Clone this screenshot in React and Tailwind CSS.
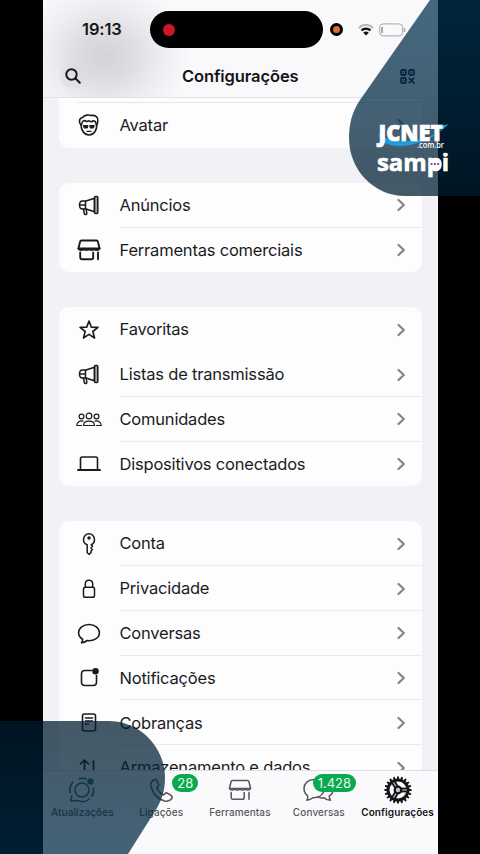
import { clsx } from 'clsx';

function Icon({ className, box = '0 0 24 24', width = 1.5, children }) {
    return (
        <svg
            viewBox={box}
            className={clsx('shrink-0 overflow-visible', className)}
            fill="none"
            stroke="currentColor"
            strokeWidth={width}
            strokeLinecap="round"
            strokeLinejoin="round"
        >
            {children}
        </svg>
    );
}

const AvatarIcon = () => (
    <Icon className="w-6 h-6" width={1.6}>
        <path d="M4 12C1.500 9.500 2 5 5.500 4.500C7.500 1.800 12 1.500 14 2.500C18.500 1.800 21.500 4.500 20.800 8C20.800 10 20.500 11 19.500 12" />
        <path d="M4 11.500C4 17 7 22 12 22C17 22 20 17 19.800 11.500" />
        <path d="M4.600 11.500C5 8.500 6 7.500 8 7.500C9 9 10.500 8.500 12 7.800C13.500 8.800 15 9 16 7.800C18 7.800 19 9 19.200 11.500" />
        <path d="M10 18.400H14" strokeWidth="1.200" />
        <path d="M6.700 12.500H11L10.400 15H7.500ZM13 12.500H17.300L16.500 15H13.600Z" fill="currentColor" strokeWidth="1" />
    </Icon>
);

const MegaphoneIcon = () => (
    <Icon className="w-6 h-6">
        <path d="M17.500 4.200L9 7H5.500C3.500 7 2.500 8.800 2.500 11C2.500 13.300 3.500 15 5.500 15H9L17.500 17.800Z" />
        <rect x="17.500" y="2.500" width="3.300" height="17" rx="1" fill="#a3a3a7" />
        <path d="M8.500 7.300V15M6.500 15L7.300 19.500C7.600 20.800 10 20.800 9.800 19.200L9.200 15.500M3 11H8.500" />
    </Icon>
);

const StoreIcon = ({ width = 1.9 }) => (
    <Icon className="w-6 h-6" width={width}>
        <path d="M4.500 2.500H19.500C20.500 2.500 20.800 3.200 21 4L22.600 10.500H1.400L3 4C3.200 3.200 3.500 2.500 4.500 2.500Z" />
        <path d="M1.500 10.500C2.500 12.500 5.500 12.500 6.800 10.800C8 12.500 11 12.500 12 10.800C13 12.500 16 12.500 17.200 10.800C18.500 12.500 21.500 12.500 22.500 10.500" />
        <path d="M3.200 14.500V19C3.200 20.700 4 21.300 5 21.300H14.500C15.600 21.300 16.200 20.500 16.200 19.500V14.500M21 14.500V21.300" />
    </Icon>
);

const StarIcon = () => (
    <Icon className="w-6 h-6" width={1.6}>
        <path d="M12 3L14.300 9.100L21 9.400L15.800 13.500L17.600 20L12 16.300L6.400 20L8.200 13.500L3 9.400L9.700 9.100Z" />
    </Icon>
);

const PeopleIcon = () => (
    <Icon className="w-[26px] h-5" box="0 0 26 20" width={1.2}>
        <circle cx="5.500" cy="6.500" r="2.400" />
        <circle cx="20.500" cy="6.500" r="2.400" />
        <circle cx="13" cy="6" r="2.800" />
        <path d="M7.500 15.500C7.500 12.500 9.500 11.200 13 11.200C16.500 11.200 18.500 12.500 18.500 15.500Z" />
        <path d="M7 11.100C3 10.400 1 12.500 .800 15.500H5.500M19 11.100C23 10.400 25 12.500 25.200 15.500H20.500" />
    </Icon>
);

const LaptopIcon = () => (
    <Icon className="w-6 h-6" width={1.6}>
        <path d="M3.500 17.500V6.800C3.500 5.600 4.200 5 5.200 5H18.800C19.800 5 20.500 5.600 20.500 6.800V17.500" />
        <path d="M1 18H23" strokeWidth="2" />
    </Icon>
);

const KeyIcon = () => (
    <Icon className="w-6 h-6">
        <path d="M10.200 12.700C7.700 12 6.500 10 6.500 7.500C6.500 4.300 8.900 1.700 12 1.700C15.100 1.700 17.500 4.300 17.500 7.500C17.500 10 16 12 14.200 12.700L15.500 14.300L14 16L15.300 17.600L14 19.200V20.700L12 22.300L10.200 20.700Z" />
        <circle cx="12" cy="6" r="1" fill="currentColor" />
    </Icon>
);

const LockIcon = () => (
    <Icon className="w-6 h-6">
        <rect x="6.500" y="10.200" width="11" height="10" rx="1.800" />
        <path d="M8.300 10V7C8.300 4.700 9.900 3.200 12 3.200C14.100 3.200 15.700 4.700 15.700 7V10" />
    </Icon>
);

const BubbleIcon = () => (
    <Icon className="w-6 h-6" width={1.6}>
        <path d="M12 2.500C6.200 2.500 1.600 6.100 1.600 10.700C1.600 13.400 3.200 15.700 5.600 17.200C5.800 18.700 5.400 19.700 4.500 20.600C6.700 20.700 8.500 19.900 9.800 18.600C16.800 19.400 22.400 16 22.400 10.700C22.400 6.100 17.800 2.500 12 2.500Z" />
    </Icon>
);

const NotificationIcon = () => (
    <Icon className="w-6 h-6" width={1.6}>
        <path d="M14.500 4.500H8C5.800 4.500 4.500 5.800 4.500 8V16C4.500 18.200 5.800 19.500 8 19.500H16C18.200 19.500 19.500 18.200 19.500 16V9.500" />
        <circle cx="18.500" cy="5.300" r="2.500" fill="currentColor" />
    </Icon>
);

const ReceiptIcon = () => (
    <Icon className="w-6 h-6" width={1.6}>
        <rect x="5.500" y="3" width="13" height="17" rx="2" />
        <path d="M8.500 7H15.500M8.500 10H15.500M8.500 13H11.500" />
    </Icon>
);

const ArrowsIcon = () => (
    <Icon className="w-6 h-6" width={1.7}>
        <path d="M7.500 19V4M3.500 8L7.500 4L11.500 8M16.500 5V20M12.500 16L16.500 20L20.500 16" />
    </Icon>
);

const UpdatesIcon = () => (
    <Icon className="w-[26px] h-[26px]" box="0 0 26 26" width={1.5}>
        <circle cx="13" cy="13" r="7" />
        <path d="M10 1.800C12.500 1 15 1 17 1.800M24.500 11C25 14 24.300 17 22.800 19.200M20.300 22C18 24 15 25 12 24.600C10 24.300 8.500 24 7.500 23.500L2 24L2.800 18.800M1.300 15.500C.500 12 1.500 8 4 5" />
        <circle cx="21.500" cy="4.500" r="2.500" fill="#16856f" stroke="#16856f" />
    </Icon>
);

const CallsIcon = () => (
    <Icon className="w-[26px] h-[26px]" box="0 0 26 26" width={1.5}>
        <path d="M6.500 2.500C3.500 4 2.300 6.500 3 9.500C4.800 16.500 10 22 16.500 24C19.500 24.800 22 24 23.800 21.500C24.500 20.500 24.300 19.500 23.300 18.700L19.800 16.300C18.800 15.600 17.800 15.800 17 16.600L15.500 18C12.500 16.500 9.800 13.500 8.700 10.800L10.200 9.200C10.800 8.500 10.800 7.500 10.300 6.700L8.500 3.300C8 2.300 7.300 2 6.500 2.500Z" />
    </Icon>
);

const ChatsIcon = () => (
    <Icon className="w-[31px] h-[26px]" box="0 0 31 26" width={1.5}>
        <path d="M11 2.500C5 2.500 1 6.500 1 11.500C1 14.500 2.300 17 4.700 18.800C5 20.500 4.500 22 3.800 23.300C6.300 23 8.500 22 10 20.700C15 21 19.500 18.500 21 14" />
        <path d="M14.500 19.700C16.500 21 19 21.300 21 20.700C22.500 22.300 25 23.300 27.500 23.300C26.500 22 26.200 20.500 26.300 19C29 17.500 30 15 30 12.500" />
    </Icon>
);

const gearTeeth = Array.from({ length: 20 }, (_, i) => i * 18);

const GearIcon = () => (
    <Icon className="w-7 h-7" box="0 0 28 28">
        {gearTeeth.map((a) => (
            <path key={a} d="M14 1.200V3" transform={`rotate(${a} 14 14)`} strokeWidth="2" />
        ))}
        <circle cx="14" cy="14" r="10" strokeWidth="3" />
        {[90, 210, 330].map((a) => (
            <g key={a} transform={`rotate(${a} 14 14)`}>
                <path d="M14 4.500V11" strokeWidth="4.800" strokeLinecap="butt" />
                <path d="M14 5.500V10" stroke="#d9d9dc" strokeWidth="1" />
            </g>
        ))}
        <circle cx="14" cy="14" r="3.300" fill="#c4c4c8" strokeWidth="2.200" />
    </Icon>
);

const QrIcon = () => (
    <Icon className="w-[15px] h-[15px] text-[#1a2228]" box="0 0 15 15" width={1.8}>
        <rect x="1" y="1" width="5" height="5" rx="1.200" />
        <rect x="9" y="1" width="5" height="5" rx="1.200" />
        <rect x="1" y="9" width="5" height="5" rx="1.200" />
        <path d="M3.500 3.500V3.600M11.500 3.500V3.600M3.500 11.500V11.600M9.300 9.300L14 14M13.700 9.300L9.300 13.700" />
    </Icon>
);

const sections = [
    [
        { label: 'Anúncios', icon: MegaphoneIcon },
        { label: 'Ferramentas comerciais', icon: StoreIcon },
    ],
    [
        { label: 'Favoritas', icon: StarIcon, noLine: true },
        { label: 'Listas de transmissão', icon: MegaphoneIcon },
        { label: 'Comunidades', icon: PeopleIcon },
        { label: 'Dispositivos conectados', icon: LaptopIcon },
    ],
    [
        { label: 'Conta', icon: KeyIcon },
        { label: 'Privacidade', icon: LockIcon },
        { label: 'Conversas', icon: BubbleIcon },
        { label: 'Notificações', icon: NotificationIcon },
        { label: 'Cobranças', icon: ReceiptIcon },
        { label: 'Armazenamento e dados', icon: ArrowsIcon },
    ],
];

const tabs = [
    { label: 'Atualizações', icon: UpdatesIcon },
    { label: 'Ligações', icon: CallsIcon, badge: '28', badgeClass: 'left-[50.500px] w-[26px]' },
    { label: 'Ferramentas', icon: () => <StoreIcon width={1.5} /> },
    { label: 'Conversas', icon: ChatsIcon, badge: '1.428', badgeClass: 'left-[33.500px] w-[43px]' },
    { label: 'Configurações', icon: GearIcon, active: true },
];

function Row({ label, icon: RowIcon, last }) {
    return (
        <div className="flex h-[44.8px] pl-[15px]">
            <div className="w-[31px] flex items-center justify-center pt-px text-[#1b1b1e]">
                <RowIcon />
            </div>
            <div className={clsx('ml-[15px] flex-1 flex items-center justify-between pt-[1.500px] pr-[16px] border-b', last ? 'border-transparent' : 'border-[#ebebef]')}>
                <span className="text-[16.5px] tracking-[-0.2px] whitespace-nowrap text-[#1b1b1e]">{label}</span>
                <Icon className="w-2.5 h-3.5 text-[#838387]" box="0 0 10 14" width={2.2}>
                    <path d="M2.500 2L7.800 7L2.500 12" />
                </Icon>
            </div>
        </div>
    );
}

function Header() {
    return (
        <header className="h-[98px] shrink-0 border-b border-[#e2e2e6] bg-[#f9f9fc] bg-[radial-gradient(ellipse_85px_75px_at_62px_56px,#d3d3d7_0%,#dcdce0_30%,#ededf1_65%,transparent_100%)]">
            <div className="flex items-center pt-[11px]">
                <div className="w-[107px] pl-[39px] text-[16.5px] font-semibold tracking-[-0.1px] text-[#161618]">19:13</div>
                <div className="w-[173px] h-[37px] rounded-full bg-black flex items-center pl-[13px]">
                    <div className="size-3 rounded-full bg-[#cf1627]" />
                </div>
                <div className="ml-[7px] size-[13px] rounded-full bg-black flex items-center justify-center">
                    <div className="size-[7px] rounded-full bg-[#d8702f]" />
                </div>
                <svg viewBox="0 0 16 12" className="ml-[15px] w-4 h-3" fill="none" stroke="#111" strokeWidth="2">
                    <path d="M1 4C5-.2 11-.2 15 4" stroke="#b5b5b8" />
                    <path d="M3.500 6.500C6 4 10 4 12.500 6.500" strokeWidth="2.300" />
                    <path d="M5.200 8.700C7 7.200 9 7.200 10.800 8.700L8 11.500Z" fill="#111" stroke="none" />
                </svg>
                <svg viewBox="0 0 27 14" className="ml-[5px] w-[27px] h-3.5" fill="none" stroke="#aaa7a9">
                    <rect x=".600" y=".900" width="23" height="12" rx="3.500" />
                    <path d="M25.500 5V9" strokeWidth="1.500" />
                    <path d="M3 4V10" strokeWidth="2" />
                </svg>
            </div>
            <div className="flex items-center h-14 pl-[17px] pr-[23px]">
                <div className="w-[25px] h-[25px] rounded-full bg-[#d9d9dd]/40 flex items-center justify-center">
                    <Icon className="w-4 h-4 text-[#19191b]" box="0 0 16 16" width={2}>
                        <circle cx="6.500" cy="6.500" r="5.200" />
                        <path d="M10.500 10.500L14.800 14.800" />
                    </Icon>
                </div>
                <h1 className="flex-1 pr-1 text-center text-[16.5px] font-semibold tracking-[-0.1px] text-[#151517]">Configurações</h1>
                <QrIcon />
            </div>
        </header>
    );
}

function TabBar() {
    return (
        <nav className="h-[84px] shrink-0 flex pr-[.500px] border-t border-[#dedee2] bg-[#fafafd]">
            {tabs.map(({ label, icon: TabIcon, badge, badgeClass, active }) => (
                <div key={label} className={clsx('relative flex-1 basis-0 min-w-0 flex flex-col items-center pt-[5px]', active ? 'text-[#151517]' : 'text-[#57575b]')}>
                    <div className="h-7 flex items-center">
                        <TabIcon />
                    </div>
                    <span className={clsx('text-[10px] leading-4 tracking-[0.1px] whitespace-nowrap', active ? 'font-semibold' : 'font-medium')}>{label}</span>
                    {badge && (
                        <span className={clsx('absolute top-[3px] h-[18px] rounded-full bg-[#0aa850] text-[#e5fae9] text-[13px] leading-[18px] text-center', badgeClass)}>
                            {badge}
                        </span>
                    )}
                </div>
            ))}
        </nav>
    );
}

function Logo() {
    return (
        <div className="absolute left-[376px] top-[120px] w-[76px] text-white">
            <svg viewBox="0 0 76 58" className="w-[76px] h-[58px] overflow-visible" fill="#fff">
                <path d="M2 14C6 33 48 29 72 5C55 22 20 27 2 14Z" fill="#1ba0dd" />
                <g fontFamily="Open Sans, sans-serif">
                    <text x="2.500" y="20.500" fontSize="23" fontWeight="800" stroke="#fff" strokeWidth=".700" textLength="65" lengthAdjust="spacingAndGlyphs">JCNET</text>
                    <text x="41" y="28.300" fontSize="8.500" fontWeight="600" textLength="27" lengthAdjust="spacingAndGlyphs">.com.br</text>
                    <text x="1" y="50.500" fontSize="24" fontWeight="700" stroke="#fff" strokeWidth=".700" textLength="72" lengthAdjust="spacingAndGlyphs">sampi</text>
                </g>
                <path d="M62 4.500C66 6 69 5.500 72.500 4C69 8 65 11 62 12.500C64.500 10 66.500 8 67.500 6.500Z" fill="#1ba0dd" />
                <rect x="53" y="38" width="12.500" height="12.500" rx="5" />
                <g fill="#7526b5">
                    <circle cx="55.600" cy="44" r="1.100" />
                    <circle cx="58.900" cy="44" r="1.100" />
                    <circle cx="62.200" cy="44" r="1.100" />
                </g>
            </svg>
        </div>
    );
}

function Overlay() {
    return (
        <div className="absolute inset-0 pointer-events-none">
            <svg viewBox="0 0 480 854" className="w-full h-full">
                <defs>
                    <linearGradient id="top" x1="0" y1="0" x2="0" y2="1">
                        <stop offset="0" stopColor="#003350" />
                        <stop offset=".600" stopColor="#002640" />
                        <stop offset="1" stopColor="#001d30" />
                    </linearGradient>
                    <linearGradient id="bottom" x1="0" y1="0" x2="0" y2="1">
                        <stop offset="0" stopColor="#001c2e" />
                        <stop offset="1" stopColor="#002a45" />
                    </linearGradient>
                </defs>
                <path d="M430 0L360 100C352 112 349 124 349 138C349 170 374 196 405 196H480V0Z" fill="url(#top)" fillOpacity=".730" />
                <path d="M0 721H108C140 721 165 747 165 778C165 790 162 799 157 808L128 854H0Z" fill="url(#bottom)" fillOpacity=".730" />
            </svg>
            <Logo />
        </div>
    );
}

export default function App() {
    return (
        <div className="relative w-[480px] h-[854px] overflow-hidden bg-black font-['Inter',sans-serif]">
            <div className="ml-[43px] w-[394.500px] h-full flex flex-col bg-[#f1f1f6]">
                <Header />
                <main className="flex-1 min-h-0 overflow-hidden pl-[15.500px] pr-4">
                    <div className="h-[50px] rounded-b-[10px] bg-[#fdfdfe] pt-[3.500px]">
                        <div className="ml-[18px] border-t border-[#e6e6ea]" />
                        <Row label="Avatar" icon={AvatarIcon} last />
                    </div>
                    {sections.map((rows, i) => (
                        <section key={i} className="mt-[34.800px] rounded-[10px] bg-[#fdfdfe]">
                            {rows.map((row, j) => (
                                <Row key={row.label} {...row} last={row.noLine || j === rows.length - 1} />
                            ))}
                        </section>
                    ))}
                </main>
                <TabBar />
            </div>
            <Overlay />
        </div>
    );
}
